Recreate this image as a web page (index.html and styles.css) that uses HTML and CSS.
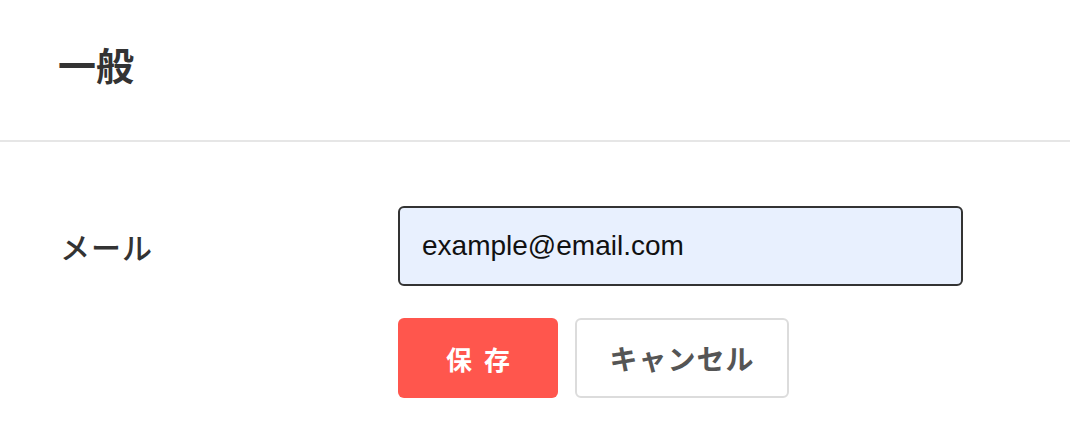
FILE: index.html
```html
<!DOCTYPE html>
<html lang="ja">
<head>
<meta charset="utf-8">
<title>一般</title>
<link rel="stylesheet" href="styles.css">
</head>
<body>
  <header class="page-header">
    <h1 class="page-title">一般</h1>
  </header>
  <main class="settings">
    <div class="form-row">
      <label class="form-label" for="email">メール</label>
      <input class="form-input" id="email" type="email" value="example@email.com">
    </div>
    <div class="form-actions">
      <button class="btn btn-primary" type="button">保存</button>
      <button class="btn btn-default" type="button">キャンセル</button>
    </div>
  </main>
</body>
</html>
```
FILE: styles.css
```css
* { box-sizing: border-box; }
html, body {
  margin: 0;
  padding: 0;
  background: #ffffff;
  font-family: "Noto Sans CJK JP", "Liberation Sans", sans-serif;
  color: #333333;
}
.page-header {
  height: 142px;
  border-bottom: 2px solid #e6e6e6;
  display: flex;
  align-items: center;
  padding: 0 0 12px 58px;
}
.page-title {
  margin: 0;
  font-size: 38px;
  line-height: 1;
  font-weight: 700;
  color: #333333;
}
.settings {
  padding: 64px 0 0 60px;
}
.form-row {
  display: flex;
  align-items: center;
}
.form-label {
  width: 338px;
  font-size: 30px;
  font-weight: 500;
  letter-spacing: 1px;
  color: #333333;
}
.form-input {
  width: 565px;
  height: 80px;
  border: 2px solid #333333;
  border-radius: 6px;
  background: #e8f0fe;
  padding: 0 22px;
  font-family: "Liberation Sans", "Noto Sans CJK JP", sans-serif;
  font-size: 28px;
  color: #111111;
  outline: none;
}
.form-actions {
  display: flex;
  gap: 17px;
  margin: 32px 0 0 338px;
}
.btn {
  height: 80px;
  border-radius: 6px;
  font-family: "Noto Sans CJK JP", "Liberation Sans", sans-serif;
  font-weight: 700;
  cursor: pointer;
}
.btn-primary {
  width: 160px;
  background: #ff564d;
  border: none;
  color: #ffffff;
  font-size: 26px;
  letter-spacing: 12px;
  padding: 0 0 0 12px;
}
.btn-default {
  width: 214px;
  background: #ffffff;
  border: 2px solid #dcdcdc;
  color: #555555;
  font-size: 28px;
  letter-spacing: 1px;
  padding: 0;
}
```
